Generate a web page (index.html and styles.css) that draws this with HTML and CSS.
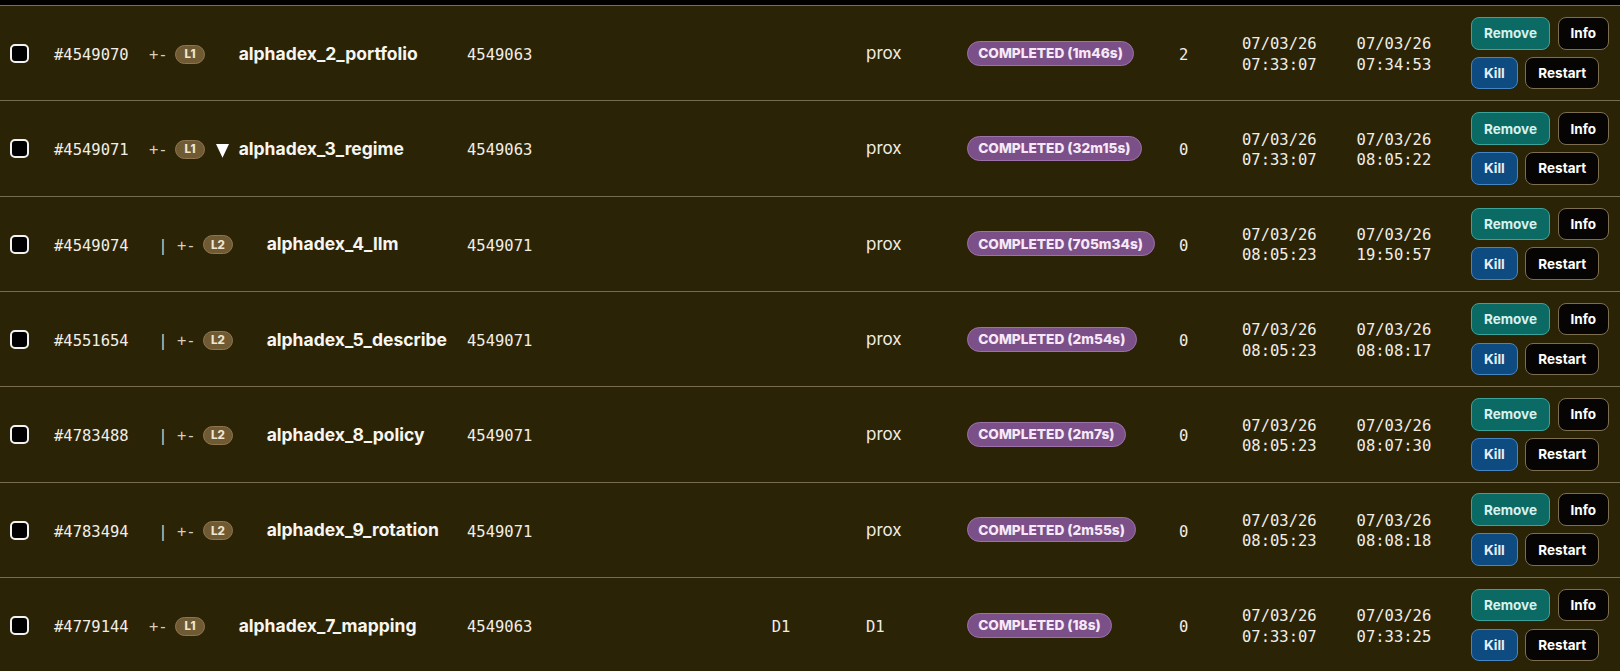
FILE: index.html
```html
<!DOCTYPE html>
<html lang="en">
<head>
<meta charset="utf-8">
<title>Jobs</title>
<link rel="stylesheet" href="styles.css">
</head>
<body>
<div class="top"></div>
<div class="table">

  <div class="row">
    <div class="c-check"><span class="cb"></span></div>
    <div class="c-id mono">#4549070</div>
    <div class="c-tree"><span class="tree mono">+-</span><span class="lvl">L1</span><span class="slot"></span><span class="name">alphadex_2_portfolio</span></div>
    <div class="c-parent mono">4549063</div>
    <div class="c-queue mono"></div>
    <div class="c-host">prox</div>
    <div class="c-status"><span class="pill">COMPLETED (1m46s)</span></div>
    <div class="c-count mono">2</div>
    <div class="c-date mono">07/03/26<br>07:33:07</div>
    <div class="c-date mono">07/03/26<br>07:34:53</div>
    <div class="c-actions"><button class="btn remove">Remove</button><button class="btn dark">Info</button><button class="btn kill">Kill</button><button class="btn dark">Restart</button></div>
  </div>

  <div class="row">
    <div class="c-check"><span class="cb"></span></div>
    <div class="c-id mono">#4549071</div>
    <div class="c-tree"><span class="tree mono">+-</span><span class="lvl">L1</span><span class="slot"><svg class="caret" width="13" height="14" viewBox="0 0 13 14"><path d="M0 0H13L6.5 13.7Z" fill="#ffffff"/></svg></span><span class="name">alphadex_3_regime</span></div>
    <div class="c-parent mono">4549063</div>
    <div class="c-queue mono"></div>
    <div class="c-host">prox</div>
    <div class="c-status"><span class="pill">COMPLETED (32m15s)</span></div>
    <div class="c-count mono">0</div>
    <div class="c-date mono">07/03/26<br>07:33:07</div>
    <div class="c-date mono">07/03/26<br>08:05:22</div>
    <div class="c-actions"><button class="btn remove">Remove</button><button class="btn dark">Info</button><button class="btn kill">Kill</button><button class="btn dark">Restart</button></div>
  </div>

  <div class="row">
    <div class="c-check"><span class="cb"></span></div>
    <div class="c-id mono">#4549074</div>
    <div class="c-tree"><span class="tree mono"> | +-</span><span class="lvl">L2</span><span class="slot"></span><span class="name">alphadex_4_llm</span></div>
    <div class="c-parent mono">4549071</div>
    <div class="c-queue mono"></div>
    <div class="c-host">prox</div>
    <div class="c-status"><span class="pill">COMPLETED (705m34s)</span></div>
    <div class="c-count mono">0</div>
    <div class="c-date mono">07/03/26<br>08:05:23</div>
    <div class="c-date mono">07/03/26<br>19:50:57</div>
    <div class="c-actions"><button class="btn remove">Remove</button><button class="btn dark">Info</button><button class="btn kill">Kill</button><button class="btn dark">Restart</button></div>
  </div>

  <div class="row">
    <div class="c-check"><span class="cb"></span></div>
    <div class="c-id mono">#4551654</div>
    <div class="c-tree"><span class="tree mono"> | +-</span><span class="lvl">L2</span><span class="slot"></span><span class="name">alphadex_5_describe</span></div>
    <div class="c-parent mono">4549071</div>
    <div class="c-queue mono"></div>
    <div class="c-host">prox</div>
    <div class="c-status"><span class="pill">COMPLETED (2m54s)</span></div>
    <div class="c-count mono">0</div>
    <div class="c-date mono">07/03/26<br>08:05:23</div>
    <div class="c-date mono">07/03/26<br>08:08:17</div>
    <div class="c-actions"><button class="btn remove">Remove</button><button class="btn dark">Info</button><button class="btn kill">Kill</button><button class="btn dark">Restart</button></div>
  </div>

  <div class="row">
    <div class="c-check"><span class="cb"></span></div>
    <div class="c-id mono">#4783488</div>
    <div class="c-tree"><span class="tree mono"> | +-</span><span class="lvl">L2</span><span class="slot"></span><span class="name">alphadex_8_policy</span></div>
    <div class="c-parent mono">4549071</div>
    <div class="c-queue mono"></div>
    <div class="c-host">prox</div>
    <div class="c-status"><span class="pill">COMPLETED (2m7s)</span></div>
    <div class="c-count mono">0</div>
    <div class="c-date mono">07/03/26<br>08:05:23</div>
    <div class="c-date mono">07/03/26<br>08:07:30</div>
    <div class="c-actions"><button class="btn remove">Remove</button><button class="btn dark">Info</button><button class="btn kill">Kill</button><button class="btn dark">Restart</button></div>
  </div>

  <div class="row">
    <div class="c-check"><span class="cb"></span></div>
    <div class="c-id mono">#4783494</div>
    <div class="c-tree"><span class="tree mono"> | +-</span><span class="lvl">L2</span><span class="slot"></span><span class="name">alphadex_9_rotation</span></div>
    <div class="c-parent mono">4549071</div>
    <div class="c-queue mono"></div>
    <div class="c-host">prox</div>
    <div class="c-status"><span class="pill">COMPLETED (2m55s)</span></div>
    <div class="c-count mono">0</div>
    <div class="c-date mono">07/03/26<br>08:05:23</div>
    <div class="c-date mono">07/03/26<br>08:08:18</div>
    <div class="c-actions"><button class="btn remove">Remove</button><button class="btn dark">Info</button><button class="btn kill">Kill</button><button class="btn dark">Restart</button></div>
  </div>

  <div class="row">
    <div class="c-check"><span class="cb"></span></div>
    <div class="c-id mono">#4779144</div>
    <div class="c-tree"><span class="tree mono">+-</span><span class="lvl">L1</span><span class="slot"></span><span class="name">alphadex_7_mapping</span></div>
    <div class="c-parent mono">4549063</div>
    <div class="c-queue mono">D1</div>
    <div class="c-host mono">D1</div>
    <div class="c-status"><span class="pill">COMPLETED (18s)</span></div>
    <div class="c-count mono">0</div>
    <div class="c-date mono">07/03/26<br>07:33:07</div>
    <div class="c-date mono">07/03/26<br>07:33:25</div>
    <div class="c-actions"><button class="btn remove">Remove</button><button class="btn dark">Info</button><button class="btn kill">Kill</button><button class="btn dark">Restart</button></div>
  </div>

</div>
</body>
</html>
```

FILE: styles.css
```css
html, body {
  margin: 0;
  padding: 0;
}

body {
  background: #2b2305;
  color: #f3f0e8;
  font-family: Inter, "Liberation Sans", sans-serif;
  overflow: hidden;
}

.top {
  height: 5px;
  background: #000000;
  border-bottom: 1px solid #7a6d52;
}

.row {
  display: grid;
  grid-template-columns: 54px 95px 318px 304.7px 94.3px 100.7px 212.3px 63px 114.6px 102.4px 161px;
  align-items: center;
  height: 95.33px;
  box-sizing: border-box;
  border-bottom: 1px solid #786c50;
}

.mono {
  font-family: "DejaVu Sans Mono", "Liberation Mono", monospace;
  font-size: 15.5px;
  color: #f1eee6;
}

.c-id,
.c-parent,
.c-queue,
.c-count,
.c-host.mono,
.tree {
  padding-top: 4px;
}

.c-check {
  padding-left: 9.5px;
  padding-top: 1px;
  display: flex;
  align-items: center;
}

.cb {
  width: 19px;
  height: 19px;
  box-sizing: border-box;
  border: 2px solid #f2f2f2;
  border-radius: 5px;
  background: #000000;
}

.c-tree {
  display: flex;
  align-items: center;
  white-space: nowrap;
}

.tree {
  white-space: pre;
  color: #d6cfbf;
}

.lvl {
  margin-left: 7px;
  margin-top: 2px;
  width: 30.7px;
  height: 19px;
  box-sizing: border-box;
  border-radius: 10px;
  background: #6f5a34;
  border: 1px solid #8e7750;
  color: #f0e6cf;
  font-size: 11.5px;
  font-weight: 800;
  display: flex;
  align-items: center;
  justify-content: center;
}

.slot {
  width: 33.3px;
  display: flex;
  justify-content: center;
  align-items: center;
}

.caret {
  display: block;
  margin-top: 5px;
}

.name {
  font-size: 17.5px;
  font-weight: 700;
  color: #f7f5f0;
}

.c-host {
  font-size: 17px;
  color: #efece4;
}

.c-host.mono {
  font-size: 15.5px;
}

.pill {
  display: inline-flex;
  align-items: center;
  height: 25px;
  box-sizing: border-box;
  padding: 0 10.5px;
  border-radius: 13px;
  background: #7b4f87;
  border: 1px solid #9d71a9;
  color: #f6e8f6;
  font-size: 13.7px;
  font-weight: 800;
  white-space: nowrap;
}

.c-date {
  line-height: 20.3px;
  padding-top: 3px;
}

.c-actions {
  padding-left: 12px;
  display: flex;
  flex-wrap: wrap;
  gap: 7.33px 7.6px;
  width: 160px;
  box-sizing: border-box;
}

.btn {
  height: 32.67px;
  box-sizing: border-box;
  padding: 0 12px;
  border-radius: 8px;
  border: 1px solid;
  font-family: Inter, "Liberation Sans", sans-serif;
  font-size: 13.5px;
  font-weight: 700;
  cursor: pointer;
}

.remove {
  background: #0c6a65;
  border-color: #3aa39a;
  color: #d7f2ee;
}

.kill {
  background: #0d4b80;
  border-color: #4585c3;
  color: #e6eef7;
}

.dark {
  background: #060504;
  border-color: #7e6e51;
  color: #ffffff;
}
```
